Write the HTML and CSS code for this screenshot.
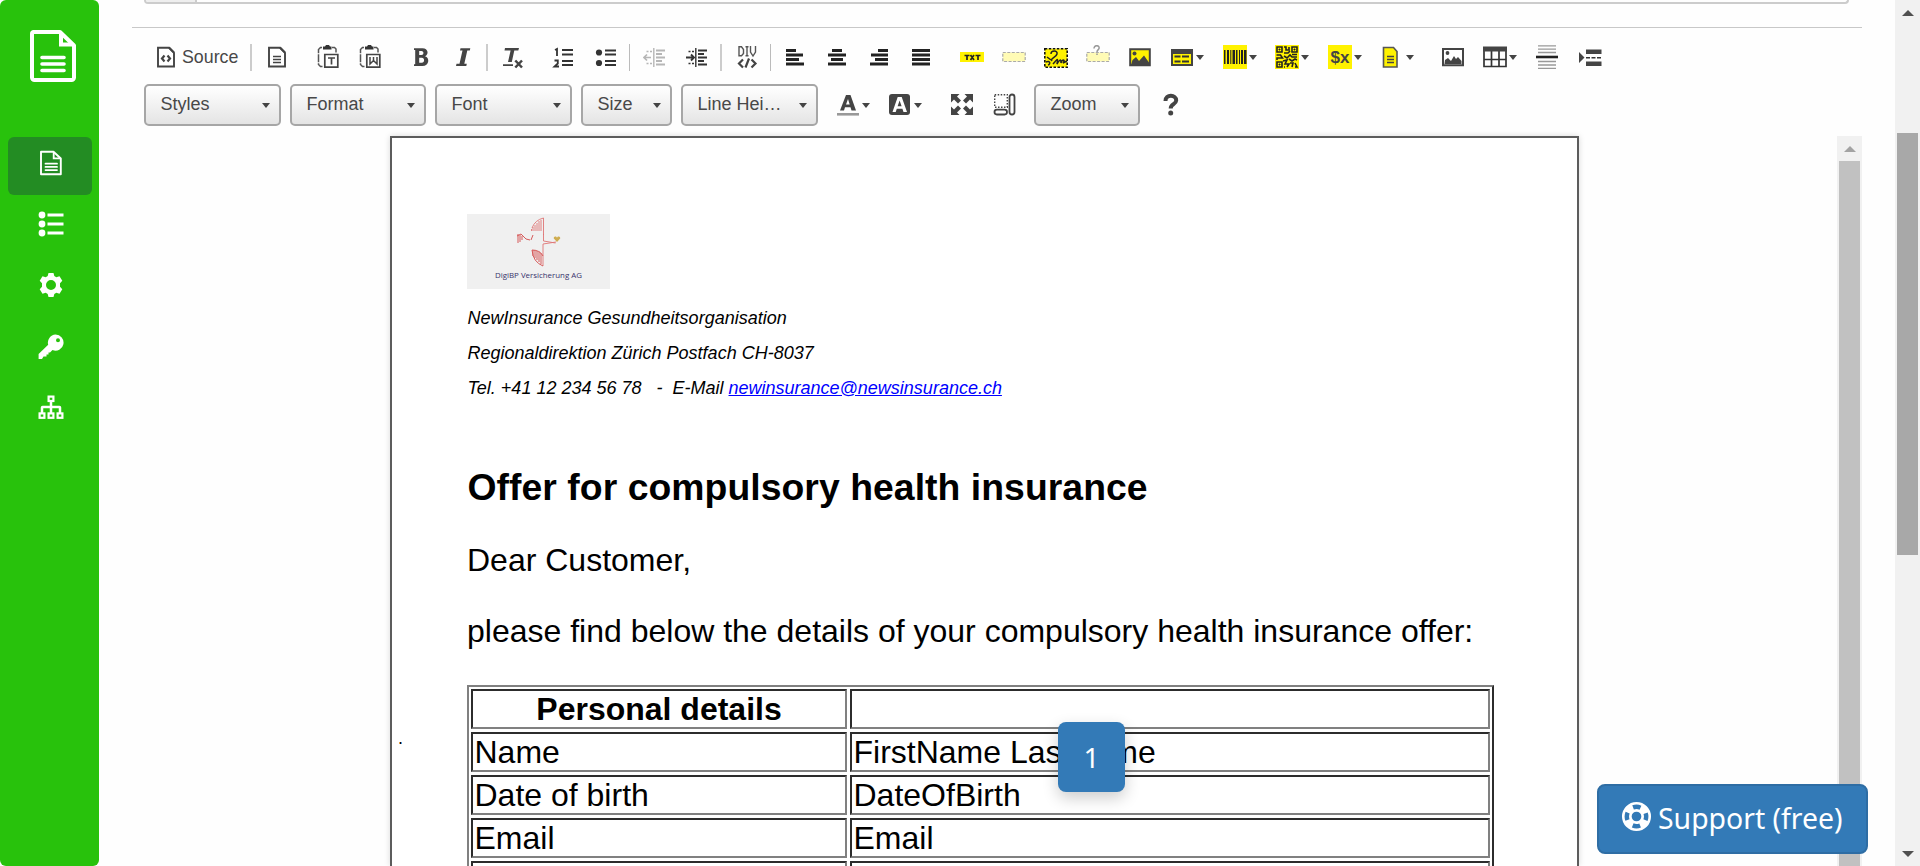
FILE: index.html
```html
<!DOCTYPE html>
<html lang="en">
<head>
<meta charset="utf-8">
<title>Template editor</title>
<link rel="stylesheet" href="styles.css">
</head>
<body>
<div class="app">
  <nav class="sidebar">
    <svg class="brand" viewBox="0 0 46 52"><path d="M3.500 2H30L44 15.500V47.500A2.500 2.500 0 0 1 41.500 50H4.500A2.500 2.500 0 0 1 2 47.500V4A2 2 0 0 1 3.500 2Z" fill="none" stroke="#fff" stroke-width="4" stroke-linejoin="round"/><path d="M31 3V14.500H43" fill="none" stroke="#fff" stroke-width="4"/><path d="M12 27.500H34M12 34H34M12 40.500H34" stroke="#fff" stroke-width="3.600" stroke-linecap="round"/></svg>
    <a class="nav-item active"><svg viewBox="0 0 26 26"><path d="M3 1.700H15.500L22.800 8.500V24.300H3Z" fill="none" stroke="#fff" stroke-width="1.900" stroke-linejoin="round"/><path d="M15.700 2V8.300H22.500" fill="none" stroke="#fff" stroke-width="1.800"/><path d="M7.500 13.700H19M7.500 16.900H19M7.500 20.100H19" stroke="#fff" stroke-width="1.800" stroke-linecap="round"/></svg></a>
    <a class="nav-item"><svg viewBox="0 0 26 26"><g fill="#fff"><circle cx="4" cy="4" r="3.400"/><circle cx="4" cy="13" r="3.400"/><circle cx="4" cy="22" r="3.400"/><path d="M9.500 2.500h16v3h-16zM9.500 11.500h16v3h-16zM9.500 20.500h16v3h-16z"/></g></svg></a>
    <a class="nav-item"><svg viewBox="0 0 26 26"><path fill="#fff" fill-rule="evenodd" d="M10.500 1h5l.8 3 2 1.200 3.200-1 2.800 4.600-2.300 2.400v3.600l2.300 2.400-2.800 4.600-3.200-1-2 1.200-.8 3h-5l-.8-3-2-1.200-3.200 1L1.700 17.200 4 14.800v-3.600L1.700 8.800 4.500 4.200l3.200 1 2-1.200ZM13 8a5 5 0 1 0 0 10 5 5 0 0 0 0-10Z"/></svg></a>
    <a class="nav-item"><svg viewBox="0 0 26 26"><path fill="#fff" fill-rule="evenodd" d="M17.500.6a8 8 0 1 1-3 15.400L12 18.500H10.500V20.500H8.500V22.500H5.500L4 25H.6V20L10.200 10.800A8 8 0 0 1 17.500.6ZM20 4.200a2 2 0 1 0 0 4 2 2 0 0 0 0-4Z"/></svg></a>
    <a class="nav-item"><svg viewBox="0 0 26 26"><g fill="none" stroke="#fff" stroke-width="2.200"><rect x="10.600" y="1.600" width="4.800" height="4.400"/><rect x="1.600" y="18.400" width="4.800" height="4.400"/><rect x="10.600" y="18.400" width="4.800" height="4.400"/><rect x="19.600" y="18.400" width="4.800" height="4.400"/><path d="M13 6V18M4 18V12.500Q4 12 4.500 12H21.500Q22 12 22 12.500V18" stroke-width="2.500"/></g></svg></a>
  </nav>

  <main class="content">
    <div class="name-field"><span class="addon"></span></div>
    <section class="editor">
      <div class="toolbar row-one">
        <span class="btn source"><svg viewBox="0 0 24 24"><use href="#page"/><path d="M10.500 10.500 8 13.500l2.500 3M13.500 10.500l2.500 3-2.500 3" fill="none" stroke="#444" stroke-width="2.200"/></svg>Source</span>
        <i class="sep"></i>
        <span class="btn"><svg viewBox="0 0 24 24"><use href="#page"/><path d="M8 11.500h8M8 14.500h8M8 17.500h8" stroke="#444" stroke-width="1.500"/></svg></span>
        <span class="btn gap"><svg viewBox="0 0 24 24"><use href="#clip"/><path d="M12 13h7M15.500 13v6.500" stroke="#444" stroke-width="1.700"/></svg></span>
        <span class="btn"><svg viewBox="0 0 24 24"><use href="#clip"/><path d="M12 12v7l3.500-3.500L19 19v-7M15.500 12v3" fill="none" stroke="#444" stroke-width="1.500"/></svg></span>
        <span class="btn gap"><svg viewBox="0 0 24 24"><path fill="#444" fill-rule="evenodd" d="M5 3.200h8.500c6 0 6.500 6.500 2.500 8 5 1.200 4.500 9.800-2.700 9.800H5v-1.700h1.200V5H5Zm5.200 2.800v4h2.300c2.600 0 2.600-4 0-4Zm0 6.800v5h2.600c3 0 3-5 0-5Z"/></svg></span>
        <span class="btn"><svg viewBox="0 0 24 24"><path fill="#444" d="M9.500 3.200h9.800l-.5 2.300h-2.500l-3 13.200h2.500l-.5 2.300H5l.5-2.300h3L11.500 5.500H9Z"/></svg></span>
        <i class="sep"></i>
        <span class="btn"><svg viewBox="0 0 24 24"><path fill="#444" d="M4 3h14l-.7 2.500h-4L10.800 17H7L9.600 5.500H3.500ZM2 19.300h10v1.700H2z"/><path d="m14.300 15.500 6.700 7m0-7-6.700 7" stroke="#444" stroke-width="2.500"/></svg></span>
        <span class="btn gap"><svg viewBox="0 0 24 24"><path d="M3 5l2-1v7M2.500 15.500h3.300v3L2.500 21.500H7" fill="none" stroke="#333" stroke-width="1.800"/><path d="M10 5h11M10 9.500h11M10 16h11M10 20h11" stroke="#333" stroke-width="1.900"/></svg></span>
        <span class="btn"><svg viewBox="0 0 24 24"><circle cx="5" cy="7.500" r="3.100" fill="#333"/><circle cx="5" cy="18" r="3.100" fill="#333"/><path d="M11 5.500h11M11 9.500h11M11 16h11M11 20h11" stroke="#333" stroke-width="1.900"/></svg></span>
        <i class="sep tight"></i>
        <span class="btn faded"><svg viewBox="0 0 24 24"><use href="#indentlines"/><path d="M8 12.500H1.500M4 9.500l-3 3 3 3" fill="none" stroke="#333" stroke-width="1.700"/></svg></span>
        <span class="btn"><svg viewBox="0 0 24 24"><use href="#indentlines"/><path d="M1 12.500h8M6 9.500l3 3-3 3" fill="none" stroke="#333" stroke-width="1.900"/></svg></span>
        <i class="sep"></i>
        <span class="btn"><svg viewBox="0 0 24 24"><path d="M4 1.800v9h2.500L8.500 8.500V4.500L6.500 1.800ZM10.500 1.800h3M12 1.800v9M10.500 10.800h3M15.500 1v6L18 11l2.500-4V1" fill="none" stroke="#555" stroke-width="1.400"/><path d="m8 14.500-4 4 4 4M16.500 14.500l4 4-4 4M14 13.500l-3.500 9" fill="none" stroke="#444" stroke-width="2.200"/></svg></span>
        <i class="sep tight"></i>
        <span class="btn align"><svg viewBox="0 0 24 24"><path d="M3 5.500h10M3 10h17M3 14.500h13M3 19h18" stroke="#222" stroke-width="2.900"/></svg></span>
        <span class="btn align"><svg viewBox="0 0 24 24"><path d="M7 5.500h10M3 10h18M6 14.500h12M3 19h18" stroke="#222" stroke-width="2.900"/></svg></span>
        <span class="btn align"><svg viewBox="0 0 24 24"><path d="M11 5.500h10M4 10h17M8 14.500h13M3 19h18" stroke="#222" stroke-width="2.900"/></svg></span>
        <span class="btn align"><svg viewBox="0 0 24 24"><path d="M3 5.500h18M3 10h18M3 14.500h18M3 19h18" stroke="#222" stroke-width="2.900"/></svg></span>
        <span class="btn flush gap"><svg viewBox="0 0 24 24"><path fill="#fff200" d="M0 7h24v10H0z"/><path d="M4.500 10.500h5M7 10.500V15M10.500 10l3.500 5M14 10l-3.500 5M15.500 10.500h5M18 10.500V15" stroke="#222" stroke-width="1.700"/></svg></span>
        <span class="btn flush"><svg viewBox="0 0 24 24"><path d="M.8 7.500h22.400v9H.8z" fill="#fffbb5" stroke="#aaa" stroke-width="1.200" stroke-dasharray="3 1.500"/></svg></span>
        <span class="btn flush"><svg viewBox="0 0 24 24"><path d="M.8 3.800h22.400v18.400H.8z" fill="#fff200" stroke="#111" stroke-width="1.600" stroke-dasharray="2.500 1.500"/><path d="M7 9c0-4 7-4 6 0s-7 4-5 7M2 17c4-2 5 2 2 3M9 19c5-6 5-6 4 0 3-5 4-5 4-1 1-4 5-4 2 0l4-2M3 12l4 3" fill="none" stroke="#222" stroke-width="1.500"/></svg></span>
        <span class="btn flush"><svg viewBox="0 0 24 24"><path d="M.8 7.500h22.400v9H.8z" fill="#fffbb5" stroke="#aaa" stroke-width="1.200" stroke-dasharray="3 1.500"/><path d="M8 3.500c0-4 6-3.500 5 0-.4 1.500-2 1.500-2 3.500M11 8.500v1.500" fill="none" stroke="#999" stroke-width="1.500"/></svg></span>
        <span class="btn flush"><svg viewBox="0 0 24 24"><path d="M2.200 4.200h19.600v16H2.200z" fill="#fff200" stroke="#444" stroke-width="2"/><circle cx="6.500" cy="8.500" r="2" fill="#444"/><path fill="#444" d="m3 20 1.500-5L8 12l3 4 5-5.500 5 7V20Z"/></svg></span>
        <span class="btn drop wide"><svg viewBox="0 0 24 24"><path fill="#444" d="M1 4h22v17H1z"/><path fill="#fff200" d="M3 9h18v10H3z"/><path d="M4.500 11.500h6M4.500 16.500h6M12 11.500h7M12 16.500h7" stroke="#333" stroke-width="2.200"/></svg><b class="arrow"></b></span>
        <span class="btn drop"><svg viewBox="0 0 24 24"><path fill="#fff200" d="M0 0h24v24H0z"/><path fill="#222" d="M1 5h1.500v14H1zM4 5h2v14H4zM7.300 5h1v14h-1zM9.500 5h2.500v14H9.500zM13 5h1.500v14H13zM16 5h1v14h-1zM18 5h2v14h-2zM21 5h2.500v14H21z"/></svg><b class="arrow"></b></span>
        <span class="btn drop wide"><svg viewBox="0 0 24 24"><path fill="#fff200" d="M0 0h24v24H0z"/><path d="M2 2h5v5H2zM17 2h5v5h-5zM2 17h5v5H2zM9 2h2v3h3V2M9 8h4l2-2M1.500 10h4l2 3H2v2M9 11l3 2 3-3 2 2h5M17 9.500h5M8 16l4-1-2 4h4l-2 3M14 14l3 2 3-2 2 1M15 18h3l-1 4M20 18l2 4h-2M9 22h1" fill="none" stroke="#222" stroke-width="1.600"/><path d="M4 4h1v1H4zM19 4h1v1h-1zM4 19h1v1H4z" stroke="#222"/></svg><b class="arrow"></b></span>
        <span class="btn drop"><svg viewBox="0 0 24 24"><path fill="#fff200" d="M0 0h24v24H0z"/><text x="2.500" y="18" class="var-text">$x</text></svg><b class="arrow"></b></span>
        <span class="btn drop late"><svg viewBox="0 0 24 24"><path d="M4.500 2.500h10l3.500 4v15.500H4.500z" fill="#fff200" stroke="#555" stroke-width="1.600"/><path d="M8 11.500h7M8 14.500h7M8 17.500h7" stroke="#444" stroke-width="1.400"/></svg><b class="arrow"></b></span>
        <span class="btn flush gap"><svg viewBox="0 0 24 24"><path d="M2 4h20v16.200H2z" fill="#fff" stroke="#444" stroke-width="2"/><circle cx="6.500" cy="8" r="1.900" fill="#444"/><path fill="#444" d="m3.500 19 .5-4 3-2 3 3 3-5 2 3 2-2 3.500 4v3Z"/></svg></span>
        <span class="btn drop"><svg viewBox="0 0 24 24"><path d="M1 3h22v18.500H1zM8.500 6v15.500M16 6v15.500M1 14.500h22" fill="none" stroke="#333" stroke-width="1.700"/><path fill="#444" d="M0 1.500h24v5H0z"/></svg><b class="arrow"></b></span>
        <span class="btn flush"><svg viewBox="0 0 24 24"><path d="M3 .8h18M3 4.200h18M3 7.500h18M3 16.500h18M3 20h18M3 23.300h18" stroke="#999" stroke-width="1.300"/><path d="M1 12h22" stroke="#222" stroke-width="2.600"/></svg></span>
        <span class="btn"><svg viewBox="0 0 24 24"><path fill="#444" d="M1 7l5.500 5.500L1 18ZM8 4.500h15.500V9H8zM8 16.500h15.500V21H8z"/><path d="M8 12.700h16" stroke="#333" stroke-width="1.600" stroke-dasharray="4 1.500"/></svg></span>
      </div>
      <div class="toolbar row-two">
        <span class="combo w137">Styles<b class="arrow"></b></span>
        <span class="combo w136">Format<b class="arrow"></b></span>
        <span class="combo w137">Font<b class="arrow"></b></span>
        <span class="combo w91">Size<b class="arrow"></b></span>
        <span class="combo w137">Line Hei…<b class="arrow"></b></span>
        <span class="btn drop"><svg viewBox="0 0 24 24"><path fill="#444" fill-rule="evenodd" d="M10 2h4.500l5.500 15.500h-4.500l-1-3.200H9l-1 3.200H4Zm2 4-2 5.500h3.700Z"/><path fill="#999" d="M1 20h22v2.600H1z"/></svg><b class="arrow"></b></span>
        <span class="btn drop wide"><svg viewBox="0 0 24 24"><rect x="1" y="1" width="21" height="21" rx="3" fill="#444"/><path fill="#fff" fill-rule="evenodd" d="M9.700 4h4l5.300 15h-3.500l-1.100-3.300H8.800L7.700 19H4.500Zm1.900 3.500-2 5.700h4Z"/></svg><b class="arrow"></b></span>
        <span class="btn flush gap"><svg viewBox="0 0 24 24"><path fill="#444" d="M1 1h8.500L7 3.500l4 4L8 10.500l-4-4L1 9.500ZM23 1h-8.500L17 3.500l-4 4 3 3 4-4 3 3ZM1 22h8.500L7 19.500l4-4-3-3-4 4-3-3ZM23 22h-8.500l2.500-2.500-4-4 3-3 4 4 3-3Z"/></svg></span>
        <span class="btn"><svg viewBox="0 0 24 24"><path d="M1.700 1.700h12.600v12.600H1.700z" fill="none" stroke="#444" stroke-width="1.400" stroke-dasharray="1.500 1.500"/><rect x="16.500" y="1.500" width="5" height="20" rx="2.500" fill="none" stroke="#444" stroke-width="1.800"/><rect x="1.500" y="16.700" width="12.500" height="4.800" rx="2.400" fill="none" stroke="#444" stroke-width="1.800"/></svg></span>
        <span class="combo zoom">Zoom<b class="arrow"></b></span>
        <span class="btn gap"><svg viewBox="0 0 24 24"><path d="M6.500 8c-.3-7 11-6.700 10.700-.5-.2 4-5.500 3.500-5.500 8" fill="none" stroke="#444" stroke-width="4"/><circle cx="11.700" cy="20" r="2.500" fill="#444"/></svg></span>
      </div>

      <div class="canvas">
        <article class="page">
          <span class="stray">.</span>
          <svg class="logo" viewBox="0 0 143 75"><rect width="143" height="75" fill="#f0f0f0"/><g fill="none" stroke="#df7575" stroke-width=".9"><path d="M76.500 4v17M74 6v11M72 7v10M70 9v8M68 11v6M66 13v4M64.500 15v2M76.500 4Q68 6 65 14M76.500 20v7l12 2M76 52V30l13-2"/></g><g fill="none" stroke="#d65a5a" stroke-width="1"><path d="M74 50V39M72 48V37.500M70 46v-9M68 44v-8M66 42v-6M76 52Q66 48 65 36M65 36q8 0 11 6M51 20v9M53 21v7M55 22v4M50 22l4-2 5 5 4 1M64 26l2-5"/></g><path fill="#cfad50" d="M90 28l-3.200-3.500c-.5-2.500 2.600-2.800 3.200-.8.600-2 3.700-1.700 3.200.8Z"/><text x="28" y="64" textLength="87" lengthAdjust="spacingAndGlyphs" class="logo-text">DigiBP Versicherung AG</text></svg>
          <div class="address">
            <p>NewInsurance Gesundheitsorganisation</p>
            <p>Regionaldirektion Zürich Postfach CH-8037</p>
            <p>Tel. +41 12 234 56 78 &nbsp; - &nbsp;E-Mail <a href="#">newinsurance@newsinsurance.ch</a></p>
          </div>
          <h1>Offer for compulsory health insurance</h1>
          <p class="body-text">Dear Customer,</p>
          <p class="body-text">please find below the details of your compulsory health insurance offer:</p>
          <div class="details">
            <div class="cell head">Personal details</div><div class="cell"></div>
            <div class="cell">Name</div><div class="cell">FirstName LastName</div>
            <div class="cell">Date of birth</div><div class="cell">DateOfBirth</div>
            <div class="cell">Email</div><div class="cell">Email</div>
            <div class="cell"></div><div class="cell"></div>
          </div>
        </article>
        <div class="inner-scroll"><b class="up"></b><i></i></div>
      </div>
    </section>
  </main>

  <div class="outer-scroll"><b class="up"></b><i></i><b class="down"></b></div>
</div>

<div class="page-badge">1</div>
<div class="support"><svg viewBox="0 0 32 32"><circle cx="16" cy="16" r="10" fill="none" stroke="#fff" stroke-width="10"/><circle cx="16" cy="16" r="10" fill="none" stroke="#337ab7" stroke-width="4.600" stroke-dasharray="7.800 7.908" stroke-dashoffset="3.900"/></svg>Support (free)</div>

<svg class="defs"><defs>
  <g id="page"><path d="M4 2.800h11l5 5V21.500H4Z" fill="#fff" stroke="#444" stroke-width="1.900"/><path d="M15 2.500l5 5" stroke="#444" stroke-width="2"/></g>
  <g id="clip"><path d="M6 2.500H4.500L2.500 4.500V19.500L4.500 21.500H6.500M16 2.500h2.500l1.500 1.500V8" fill="none" stroke="#555" stroke-width="1.500" stroke-dasharray="8 1"/><path fill="#333" d="M7 1.500h2L10 0h3l1 1.500h1.500V4.500H7Z"/><path d="M8.800 9.500h13v12.700h-13z" fill="#fff" stroke="#444" stroke-width="1.700"/></g>
  <g id="indentlines"><path d="M10.800 3v19" stroke="#333" stroke-width="1.400"/><path d="M13 5.500h9M13 9h6M13 12.500h9M13 16h6M13 19.500h9" stroke="#333" stroke-width="1.800"/><path d="M3.500 6.500h5.500M3.500 18.500h5.500" stroke="#333" stroke-width="1.500" stroke-dasharray="2 1.500"/></g>
</defs></svg>
</body>
</html>
```
FILE: styles.css
```css
* { box-sizing: border-box; }
html, body { height: 100%; overflow: hidden; }
body { margin: 0; background: #fefefe; font-family: "Liberation Sans", Arial, sans-serif; color: #000; }
p, h1 { margin: 0; }
i, b { display: block; }
.defs { position: absolute; width: 0; height: 0; }
.app { display: flex; height: 866px; }

.sidebar { width: 99px; flex: none; background: #28c20c; border-radius: 6px; padding: 30px 7px 0 8px; display: flex; flex-direction: column; align-items: stretch; }
.brand { width: 46px; height: 52px; margin: 0 0 55px 22px; flex: none; }
.nav-item { height: 58px; margin-bottom: 3.200px; display: flex; align-items: center; justify-content: center; border-radius: 6px; padding: 0 0 6px 2px; flex: none; }
.nav-item.active { background: #238c23; }
.nav-item svg { width: 26px; height: 26px; }

.content { flex: 1; padding: 0 33px; display: flex; flex-direction: column; }
.name-field { height: 4px; flex: none; margin: 0 13px 0 12px; border: 2px solid #ccc; border-top: 0; border-radius: 0 0 5px 5px; overflow: hidden; display: flex; }
.addon { width: 51px; background: #eee; border-right: 2px solid #ccc; }
.editor { margin-top: 23px; border-top: 1px solid #c8c8c8; flex: 1; display: flex; flex-direction: column; min-height: 0; }

.toolbar { display: flex; align-items: center; padding-left: 12px; flex: none; font-size: 18px; color: #484848; }
.row-one { height: 56px; padding-top: 2px; }
.row-two { height: 42px; }
.btn { width: 42px; height: 42px; display: flex; align-items: center; padding-left: 9.500px; flex: none; }
.btn.align, .btn.flush, .btn.drop { padding-left: 9px; }
.btn svg { width: 24px; height: 24px; flex: none; }
.source { width: 103px; gap: 4.500px; font-size: 17.800px; }
.gap { margin-left: 9px; }
.drop { width: 52px; gap: 2px; }
.drop.wide { width: 53px; }
.faded { opacity: .35; }
.sep { width: 2px; height: 27px; background: #ccc; margin: 0 3px; }
.sep.tight { width: 1px; background: #bbb; }
.arrow { width: 0; height: 0; border: 4.500px solid transparent; border-top: 5px solid #444; border-bottom: 0; flex: none; }
.drop.late { gap: 3px; padding-left: 8px; }
.var-text { font: bold 17px "Liberation Sans", sans-serif; fill: #444; }
.combo { height: 42px; border: 2px solid #a6a6a6; border-radius: 5px; background: linear-gradient(#fff, #e4e4e4); display: flex; align-items: center; justify-content: space-between; padding: 0 9px 2px 14.500px; margin-right: 9px; flex: none; }
.combo .arrow { margin-top: 3px; }
.w137 { width: 137px; }
.w136 { width: 136px; }
.w91 { width: 91px; }
.zoom { width: 106px; margin: 0 0 0 9px; }

.canvas { flex: 1; margin-top: 10px; padding-left: 258px; display: flex; justify-content: space-between; min-height: 0; }
.page { position: relative; width: 1189px; border: 2px solid #5c5c5c; border-bottom: 0; box-shadow: 0 0 6px rgba(0,0,0,.15); background: #fff; padding: 76px 0 0 75px; overflow: hidden; }
.stray { position: absolute; left: 6px; top: 590px; font-size: 18px; }
.logo { display: block; width: 143px; height: 75px; }
.logo-text { font: 8px "Open Sans", sans-serif; fill: #37306b; }
.address { margin: 12px 0 0 .500px; font-size: 18px; line-height: 35px; font-style: italic; }
.address a { color: #00f; }
h1 { margin: 59px 0 0 .500px; font-size: 37.333px; line-height: 44px; letter-spacing: .050px; }
.body-text { margin-top: 35px; font-size: 32px; line-height: 36px; }
h1 + .body-text { margin-top: 33px; }
.details { margin-top: 36px; width: 1027px; display: grid; grid-template-columns: 376px 640px; grid-auto-rows: 40px; gap: 3px; padding: 2px; border: 2px solid; border-color: #808080 #2c2c2c #2c2c2c #808080; font-size: 32px; line-height: 36px; }
.cell { border: 2px solid; border-color: #2c2c2c #808080 #808080 #2c2c2c; padding: 0 1.500px; }
.head { font-weight: bold; text-align: center; }

.inner-scroll { width: 25px; background: #f1f1f1; display: flex; flex-direction: column; align-items: center; }
.inner-scroll .up { margin: 10px 0 9px; border-bottom-color: #a3a3a3; }
.inner-scroll i { width: 21px; flex: 1; background: #c1c1c1; }
.outer-scroll { width: 25px; background: #f1f1f1; display: flex; flex-direction: column; align-items: center; }
.outer-scroll i { width: 21px; height: 422px; background: #a8a8a8; margin-top: 117px; }
.up { width: 0; height: 0; border: 6px solid transparent; border-top: 0; border-bottom: 6px solid #505050; margin-top: 10px; }
.down { width: 0; height: 0; border: 6px solid transparent; border-bottom: 0; border-top: 6px solid #505050; margin-top: auto; margin-bottom: 9px; }

.page-badge { position: absolute; left: 1058px; top: 722px; width: 67px; height: 70px; border-radius: 8px; background: #337ab7; color: #fff; font: 28px/70px "Noto Sans", sans-serif; text-align: center; box-shadow: 0 6px 16px rgba(0,0,0,.2); }
.support { position: absolute; left: 1597px; top: 784px; width: 271px; height: 70px; border: 2px solid #2e6da4; border-radius: 8px; background: #337ab7; color: #fff; font: 28.400px/64px "Noto Sans", sans-serif; display: flex; padding-left: 22px; gap: 6px; white-space: nowrap; }
.support svg { width: 31px; height: 31px; margin-top: 15px; flex: none; }
```
